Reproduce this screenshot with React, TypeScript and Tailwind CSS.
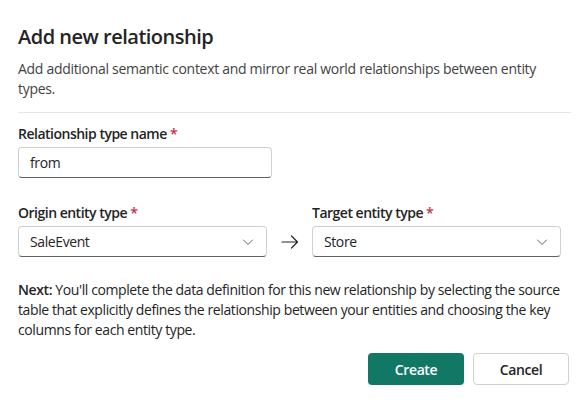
import React from "react";

const font = { fontFamily: '"Open Sans", "Noto Sans", sans-serif' };

function Chevron() {
  return (
    <svg width="12" height="12" viewBox="0 0 12 12" fill="none">
      <path d="M1.5 4L6 8.5L10.5 4" stroke="#616161" strokeWidth="1" strokeLinecap="round" strokeLinejoin="round" />
    </svg>
  );
}

function ArrowRight() {
  return (
    <svg width="18" height="14" viewBox="0 0 18 14" fill="none">
      <path d="M1 7H16.5M10.5 1L16.5 7L10.5 13" stroke="#242424" strokeWidth="1.2" strokeLinecap="round" strokeLinejoin="round" />
    </svg>
  );
}

function Label({ children }: { children: React.ReactNode }) {
  return (
    <div className="text-[14px] leading-[20px] font-semibold tracking-[-0.5px] text-[#242424]">
      {children} <span className="text-[#c4314b]">*</span>
    </div>
  );
}

function Select({ value }: { value: string }) {
  return (
    <div className="flex h-[31px] items-center justify-between rounded-[4px] border border-[#d1d1d1] border-b-[#616161] bg-white pl-[11px] pr-[12px] text-[14px] tracking-[-0.4px] text-[#242424]">
      <span>{value}</span>
      <Chevron />
    </div>
  );
}

export default function App() {
  return (
    <div className="h-[404px] w-[587px] bg-white pl-[18px] pr-[16px] pt-[23px]" style={font}>
      <h1 className="text-[20px] leading-[28px] font-semibold tracking-[-0.5px] text-[#242424]">Add new relationship</h1>
      <p className="mt-[8px] max-w-[530px] text-[14px] leading-[20px] tracking-[-0.3px] text-[#424242]">
        Add additional semantic context and mirror real world relationships between entity types.
      </p>
      <div className="mt-[13px] h-px bg-[#e6e6e6]" />

      <div className="mt-[11px]">
        <Label>Relationship type name</Label>
        <div className="mt-[3px] flex h-[31px] w-[254px] items-center rounded-[4px] border border-[#d1d1d1] border-b-[#616161] pl-[11px] text-[14px] tracking-[-0.4px] text-[#242424]">
          from
        </div>
      </div>

      <div className="mt-[25px] flex items-end">
        <div className="w-[249px]">
          <Label>Origin entity type</Label>
          <div className="mt-[3px]">
            <Select value="SaleEvent" />
          </div>
        </div>
        <div className="flex h-[31px] w-[45px] items-center justify-center">
          <ArrowRight />
        </div>
        <div className="w-[249px]">
          <Label>Target entity type</Label>
          <div className="mt-[3px]">
            <Select value="Store" />
          </div>
        </div>
      </div>

      <p className="mt-[23px] text-[14px] leading-[20px] tracking-[-0.4px] text-[#242424]">
        <span className="font-semibold">Next:</span> You'll complete the data definition for this new relationship by
        selecting the source table that explicitly defines the relationship between your entities and choosing the key
        columns for each entity type.
      </p>

      <div className="mt-[13px] flex justify-end gap-[9px] pr-[2px]">
        <button className="h-[32px] w-[96px] rounded-[4px] bg-[#117865] text-[14px] font-semibold tracking-[-0.4px] text-white">
          Create
        </button>
        <button className="h-[32px] w-[96px] rounded-[4px] border border-[#d1d1d1] bg-white text-[14px] font-semibold tracking-[-0.4px] text-[#242424]">
          Cancel
        </button>
      </div>
    </div>
  );
}
